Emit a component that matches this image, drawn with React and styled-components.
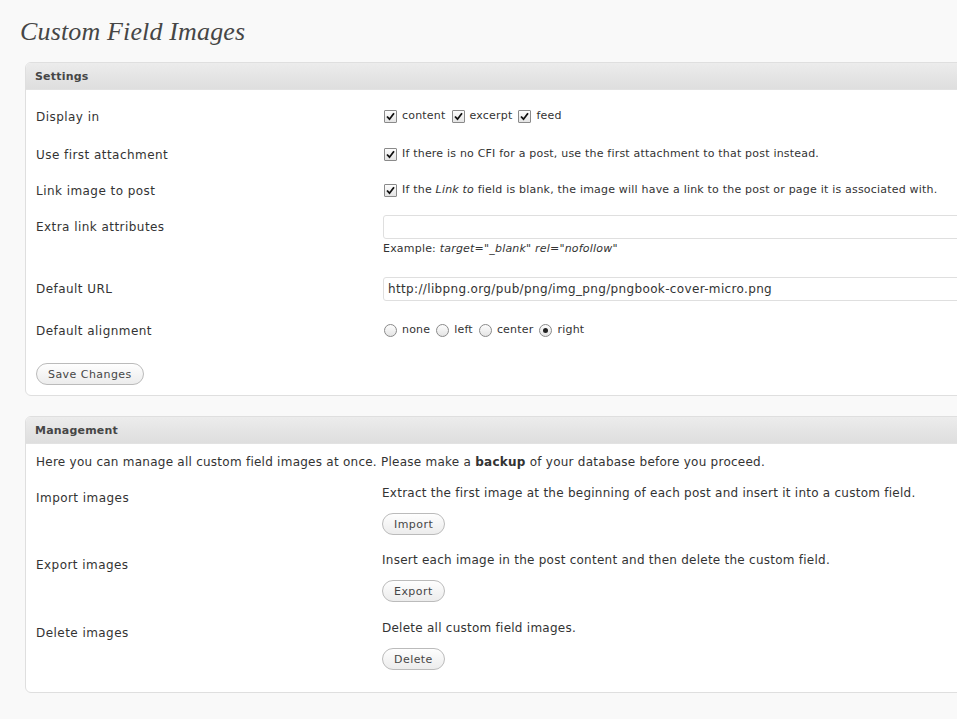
import React from "react";
import styled, { createGlobalStyle } from "styled-components";

const GlobalStyle = createGlobalStyle`
  html, body {
    margin: 0;
    padding: 0;
    background: #f9f9f9;
    overflow: hidden;
  }
  body {
    font-family: "DejaVu Sans", Verdana, sans-serif;
    color: #333;
    font-size: 12px;
  }
`;

const Wrap = styled.div`
  padding: 0 0 40px 20px;
  width: 1020px;
`;

const Title = styled.h2`
  margin: 0;
  padding: 17px 0 0 0;
  height: 46px;
  box-sizing: border-box;
  font-family: "Liberation Serif", "Times New Roman", serif;
  font-style: italic;
  font-weight: normal;
  font-size: 26px;
  line-height: 30px;
  letter-spacing: 0.15px;
  color: #464646;
`;

const Box = styled.div`
  margin: ${(p) => p.$mt || 0}px 0 0 5px;
  border: 1px solid #dfdfdf;
  border-radius: 6px;
  background: #fff;
  overflow: hidden;
`;

const BoxHead = styled.h3`
  margin: 0;
  height: 26px;
  padding: 0 9px;
  display: flex;
  align-items: center;
  font-size: 11px;
  font-weight: bold;
  letter-spacing: 0.2px;
  color: #464646;
  background: linear-gradient(to bottom, #ececec, #dedede);
  border-bottom: 1px solid #e2e2e2;
`;

const BoxBody = styled.div`
  padding: 0 10px ${(p) => p.$pb || 10}px 10px;
`;

const Row = styled.div`
  display: grid;
  grid-template-columns: 347px 1fr;
  align-items: start;
  margin-top: ${(p) => p.$mt || 0}px;
`;

const Label = styled.div`
  font-size: 12px;
  line-height: ${(p) => p.$lh || 20}px;
  padding-top: ${(p) => p.$pt || 0}px;
  letter-spacing: 0.45px;
  color: #333;
`;

const Field = styled.div`
  font-size: 11px;
  line-height: 20px;
  display: flex;
  align-items: center;
  flex-wrap: wrap;
  margin-top: -1px;
`;

const Choice = styled.label`
  display: inline-flex;
  align-items: center;
  gap: 5px;
  margin-right: 5px;
  font-size: 11px;
  letter-spacing: 0.2px;
  color: #333;
  em {
    font-style: italic;
  }
`;

const Box13 = styled.span`
  width: 11px;
  height: 11px;
  border: 1px solid #8a8a8a;
  border-radius: ${(p) => (p.$round ? "50%" : "1px")};
  background: linear-gradient(to bottom, #fdfdfd, #e4e4e4);
  display: inline-flex;
  align-items: center;
  justify-content: center;
  margin-left: 1px;
  flex: none;
`;

const Dot = styled.span`
  width: 5px;
  height: 5px;
  border-radius: 50%;
  background: #222;
`;

const TextInput = styled.input`
  box-sizing: border-box;
  width: 100%;
  height: 24px;
  border: 1px solid #dfdfdf;
  border-radius: 3px;
  background: #fff;
  padding: 0 4px;
  font-family: "DejaVu Sans", Verdana, sans-serif;
  font-size: 12px;
  letter-spacing: 0.35px;
  color: #333;
  outline: none;
`;

const Hint = styled.div`
  font-size: 11px;
  line-height: 16px;
  margin-top: 2px;
  letter-spacing: 0.2px;
  color: #333;
  em {
    font-style: italic;
  }
`;

const Button = styled.button`
  display: inline-block;
  height: 22px;
  padding: 0 11px;
  margin-top: ${(p) => p.$mt || 0}px;
  border: 1px solid #bbb;
  border-radius: 11px;
  background: linear-gradient(to bottom, #fefefe, #ececec);
  font-family: "DejaVu Sans", Verdana, sans-serif;
  font-size: 11px;
  color: #464646;
  letter-spacing: 0.45px;
  cursor: pointer;
`;

const Text = styled.div`
  font-size: 12px;
  line-height: 20px;
  margin-top: ${(p) => p.$mt || 0}px;
  letter-spacing: 0.25px;
  color: #333;
`;

const Col = styled.div`
  display: flex;
  flex-direction: column;
  align-items: flex-start;
  margin-left: -1px;
`;

const Check = () => (
  <Box13>
    <svg width="9" height="9" viewBox="0 0 9 9">
      <path d="M1 4.5 L3.5 7.2 L8 1.2" fill="none" stroke="#111" strokeWidth="1.8" />
    </svg>
  </Box13>
);

const Radio = ({ on }) => <Box13 $round>{on ? <Dot /> : null}</Box13>;

const alignments = ["none", "left", "center", "right"];

const manage = [
  { label: "Import images", text: "Extract the first image at the beginning of each post and insert it into a custom field.", btn: "Import", mt: 11 },
  { label: "Export images", text: "Insert each image in the post content and then delete the custom field.", btn: "Export", mt: 15 },
  { label: "Delete images", text: "Delete all custom field images.", btn: "Delete", mt: 16 },
];

export default function App() {
  return (
    <>
      <GlobalStyle />
      <Wrap>
        <Title>Custom Field Images</Title>

        <Box $mt={16}>
          <BoxHead>Settings</BoxHead>
          <BoxBody $pb={10}>
            <Row $mt={17}>
              <Label>Display in</Label>
              <Field>
                <Choice><Check />content</Choice>
                <Choice><Check />excerpt</Choice>
                <Choice><Check />feed</Choice>
              </Field>
            </Row>
            <Row $mt={18}>
              <Label>Use first attachment</Label>
              <Field>
                <Choice><Check />If there is no CFI for a post, use the first attachment to that post instead.</Choice>
              </Field>
            </Row>
            <Row $mt={16}>
              <Label>Link image to post</Label>
              <Field>
                <Choice>
                  <Check />
                  <span>If the <em>Link to</em> field is blank, the image will have a link to the post or page it is associated with.</span>
                </Choice>
              </Field>
            </Row>
            <Row $mt={14}>
              <Label $lh={24}>Extra link attributes</Label>
              <div>
                <TextInput defaultValue="" />
                <Hint>Example: <em>target="_blank" rel="nofollow"</em></Hint>
              </div>
            </Row>
            <Row $mt={20}>
              <Label $lh={24}>Default URL</Label>
              <TextInput defaultValue="http://libpng.org/pub/png/img_png/pngbook-cover-micro.png" />
            </Row>
            <Row $mt={20}>
              <Label>Default alignment</Label>
              <Field>
                {alignments.map((a) => (
                  <Choice key={a}><Radio on={a === "right"} />{a}</Choice>
                ))}
              </Field>
            </Row>
            <Button $mt={22}>Save Changes</Button>
          </BoxBody>
        </Box>

        <Box $mt={20}>
          <BoxHead>Management</BoxHead>
          <BoxBody $pb={22}>
            <Text $mt={8}>
              Here you can manage all custom field images at once. Please make a <b>backup</b> of your database before you proceed.
            </Text>
            {manage.map((m) => (
              <Row key={m.label} $mt={m.mt}>
                <Label $pt={5}>{m.label}</Label>
                <Col>
                  <Text>{m.text}</Text>
                  <Button $mt={10}>{m.btn}</Button>
                </Col>
              </Row>
            ))}
          </BoxBody>
        </Box>
      </Wrap>
    </>
  );
}
